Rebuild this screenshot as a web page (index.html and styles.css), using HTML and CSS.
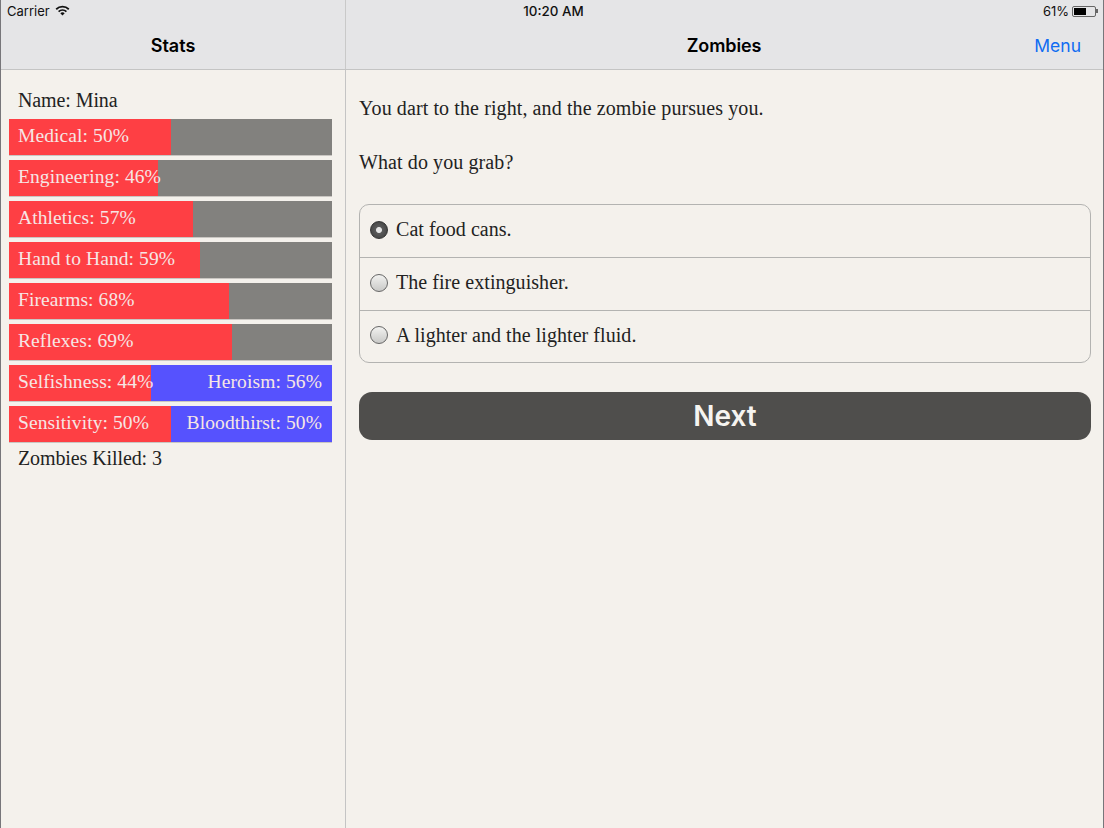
FILE: index.html
```html
<!DOCTYPE html>
<html>
<head>
  <title>Zombies</title>
  <link rel="stylesheet" href="styles.css">
</head>
<body>
  <div class="top">
    <div class="statusbar">
      <div class="status-left">
        <span>Carrier</span>
        <svg class="wifi" width="15" height="11" viewBox="0 0 15 11">
          <path d="M0.6 3.6 A10 10 0 0 1 14.4 3.6 L13.2 4.9 A8.2 8.2 0 0 0 1.8 4.9 Z" />
          <path d="M3 6 A6.6 6.6 0 0 1 12 6 L10.8 7.3 A5 5 0 0 0 4.2 7.3 Z" />
          <path d="M5.3 8.3 A3.3 3.3 0 0 1 9.7 8.3 L7.5 10.6 Z" />
        </svg>
      </div>
      <div class="status-time">10:20 AM</div>
      <div class="status-right">
        <span>61%</span>
        <span class="battery"><span class="battery-level"></span></span>
        <span class="battery-tip"></span>
      </div>
    </div>
    <div class="navbar">
      <div class="nav-left">Stats</div>
      <div class="nav-main">
        <span class="nav-title">Zombies</span>
        <a class="nav-menu" href="#">Menu</a>
      </div>
    </div>
    <div class="top-divider"></div>
  </div>

  <div class="main">
    <div class="stats">
      <div class="stat-text name">Name: Mina</div>
      <div class="bar"><div class="fill" style="width: 50%">Medical: 50%</div></div>
      <div class="bar"><div class="fill" style="width: 46%">Engineering: 46%</div></div>
      <div class="bar"><div class="fill" style="width: 57%">Athletics: 57%</div></div>
      <div class="bar"><div class="fill" style="width: 59%">Hand to Hand: 59%</div></div>
      <div class="bar"><div class="fill" style="width: 68%">Firearms: 68%</div></div>
      <div class="bar"><div class="fill" style="width: 69%">Reflexes: 69%</div></div>
      <div class="bar bar-opposed"><div class="fill" style="width: 44%">Selfishness: 44%</div><div class="other">Heroism: 56%</div></div>
      <div class="bar bar-opposed"><div class="fill" style="width: 50%">Sensitivity: 50%</div><div class="other">Bloodthirst: 50%</div></div>
      <div class="stat-text killed">Zombies Killed: 3</div>
    </div>

    <div class="content">
      <p>You dart to the right, and the zombie pursues you.</p>
      <p>What do you grab?</p>
      <div class="choices">
        <div class="choice"><span class="radio checked"></span>Cat food cans.</div>
        <div class="choice"><span class="radio"></span>The fire extinguisher.</div>
        <div class="choice"><span class="radio"></span>A lighter and the lighter fluid.</div>
      </div>
      <button class="next">Next</button>
    </div>
  </div>
</body>
</html>
```

FILE: styles.css
```css
* {
  box-sizing: border-box;
}

html, body {
  height: 100%;
}

body {
  margin: 0;
  width: 1104px;
  height: 828px;
  overflow: hidden;
  display: flex;
  flex-direction: column;
  background-color: #f4f1ec;
  border-left: 1px solid #77767a;
  border-right: 1px solid #77767a;
  font-family: "Liberation Serif", serif;
  color: #222;
}

.top {
  position: relative;
  height: 70px;
  background-color: #e5e5e7;
  border-bottom: 1px solid #c4c4c4;
  font-family: Inter, "Liberation Sans", sans-serif;
  color: #000;
}

.top-divider {
  position: absolute;
  left: 344px;
  top: 0;
  bottom: 0;
  width: 1px;
  background-color: #c9c9c9;
}

.statusbar {
  height: 22px;
  position: relative;
  display: flex;
  justify-content: space-between;
  align-items: center;
  padding: 0 5px 0 6px;
  font-size: 13px;
  color: #111;
}

.status-left {
  display: flex;
  align-items: center;
  gap: 5px;
}

.wifi {
  fill: #111;
  margin-top: -2px;
}

.status-time {
  position: absolute;
  left: 3px;
  right: 0;
  text-align: center;
  font-size: 13.4px;
  font-weight: 500;
}

.status-right {
  display: flex;
  align-items: center;
}

.battery {
  width: 24px;
  height: 11px;
  margin-left: 3px;
  padding: 1px;
  border: 1px solid #666;
  border-radius: 2px;
}

.battery-level {
  display: block;
  width: 61%;
  height: 100%;
  background-color: #000;
}

.battery-tip {
  width: 2px;
  height: 4px;
  background-color: #666;
}

.navbar {
  height: 47px;
  display: flex;
}

.nav-left {
  width: 344px;
  text-align: center;
  line-height: 47px;
  font-size: 18px;
  font-weight: 600;
}

.nav-main {
  flex: 1;
  position: relative;
  text-align: center;
  line-height: 47px;
  font-size: 18px;
}

.nav-title {
  font-weight: 600;
  letter-spacing: -0.1px;
}

.nav-menu {
  position: absolute;
  right: 22px;
  top: 0;
  color: #0f6cf2;
  text-decoration: none;
  font-size: 17.5px;
}

.main {
  flex: 1;
  display: flex;
}

.stats {
  width: 345px;
  padding: 18px 13px 0 8px;
  border-right: 1px solid #c4c4c4;
}

.stat-text {
  padding-left: 9px;
  font-size: 20px;
  letter-spacing: -0.1px;
  color: #222;
}

.name {
  height: 31px;
  line-height: 24px;
}

.killed {
  height: 30px;
  line-height: 22px;
}

.bar {
  width: 323px;
  height: 37px;
  margin-bottom: 4px;
  display: flex;
  background-color: #82817e;
  border-bottom: 1px solid #c9c6c2;
  font-size: 19.5px;
  letter-spacing: 0.1px;
  line-height: 33px;
  color: #f6e6e4;
}

.fill {
  flex: none;
  padding-left: 9px;
  white-space: nowrap;
  background-color: #fe3f44;
}

.bar-opposed {
  background-color: #5652fe;
}

.other {
  flex: 1;
  padding-right: 10px;
  text-align: right;
  white-space: nowrap;
}

.content {
  flex: 1;
  padding: 26px 12px 0 13px;
}

.content p {
  margin: 0 0 30px 0;
  font-size: 20px;
  line-height: 24px;
  letter-spacing: 0.1px;
}

.choices {
  margin-top: 30px;
  border: 1px solid #b3b3b1;
  border-radius: 10px;
}

.choice {
  height: 53px;
  display: flex;
  align-items: center;
  padding: 0 0 3px 10px;
  font-size: 20px;
  letter-spacing: 0.05px;
  border-bottom: 1px solid #b3b3b1;
}

.choice:last-child {
  height: 51px;
  border-bottom: none;
}

.radio {
  width: 18px;
  height: 18px;
  margin-right: 8px;
  border: 1px solid #666;
  border-radius: 50%;
  background: linear-gradient(#f2f2f0, #c9c9c7);
}

.radio.checked {
  border: 1px solid #333;
  background: radial-gradient(circle, #e6e6e6 0, #e6e6e6 2.5px, #5a5a5a 3.5px, #3c3c3c 100%);
}

.next {
  display: block;
  width: 100%;
  height: 48px;
  margin-top: 29px;
  border: none;
  border-radius: 13px;
  background-color: #4f4e4c;
  color: #f6f4f0;
  font-family: Inter, "Liberation Sans", sans-serif;
  font-size: 28px;
  font-weight: 600;
}
```
